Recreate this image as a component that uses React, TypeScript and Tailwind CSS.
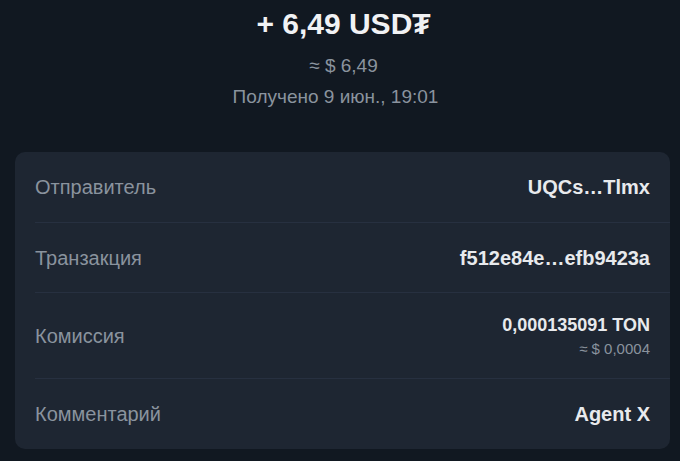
const rows = [
  { label: "Отправитель", value: "UQCs…Tlmx", h: "h-[71px]" },
  { label: "Транзакция", value: "f512e84e…efb9423a", h: "h-[70px]" },
];

export default function App() {
  return (
    <div
      className="min-h-[461px] w-full bg-[#111821] pl-[15px] pr-[10px] text-[#e8eaed]"
      style={{ fontFamily: '"Liberation Sans", Arial, sans-serif' }}
    >
      <div className="flex flex-col items-center pt-[6px] pl-[2px]">
        <div className="text-[30px] font-bold leading-[36px] text-[#f1f2f4]">+ 6,49 USD₮</div>
        <div className="mt-[11px] text-[19px] leading-[26px] text-[#8a939e]">≈ $ 6,49</div>
        <div className="mt-[5px] mr-[16px] text-[19px] leading-[26px] text-[#8a939e]">Получено 9 июн., 19:01</div>
      </div>

      <div className="mt-[42px] rounded-[10px] bg-[#1e2632]">
        {rows.map((r) => (
          <div key={r.label} className={`ml-5 flex items-center justify-between border-b border-[#273040] pr-5 ${r.h}`}>
            <span className="text-[20px] text-[#8a939e]">{r.label}</span>
            <span className="text-[20px] font-bold">{r.value}</span>
          </div>
        ))}
        <div className="ml-5 flex h-[86px] items-center justify-between border-b border-[#273040] pr-5">
          <span className="text-[20px] text-[#8a939e]">Комиссия</span>
          <div className="flex flex-col items-end">
            <span className="text-[18px] font-bold leading-[22px]">0,000135091 TON</span>
            <span className="mt-[4px] text-[15px] leading-[18px] text-[#8a939e]">≈ $ 0,0004</span>
          </div>
        </div>
        <div className="ml-5 flex h-[70px] items-center justify-between pr-5">
          <span className="text-[20px] text-[#8a939e]">Комментарий</span>
          <span className="text-[20px] font-bold">Agent X</span>
        </div>
      </div>
    </div>
  );
}
